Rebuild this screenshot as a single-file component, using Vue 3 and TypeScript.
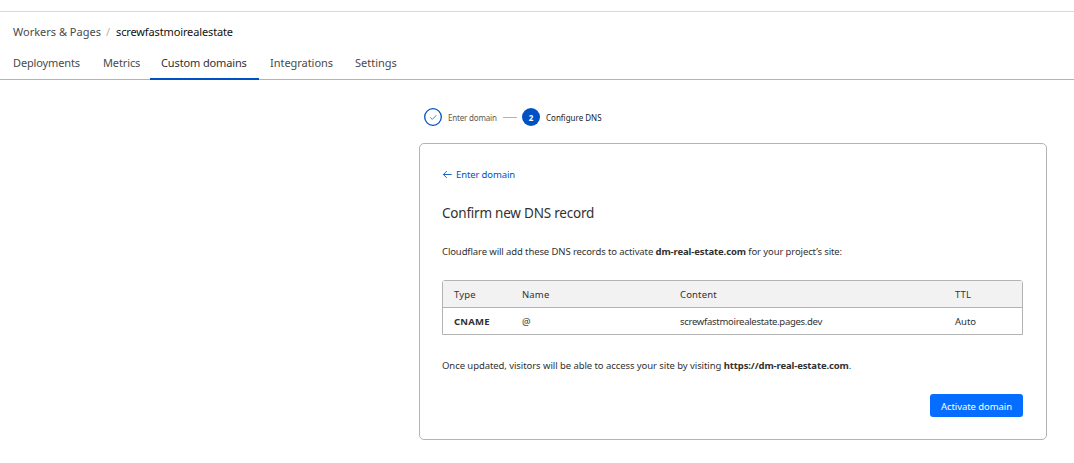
<script setup lang="ts">
import { ref } from 'vue'

interface Tab {
  id: string
  label: string
}

interface DnsRecord {
  type: string
  name: string
  content: string
  ttl: string
}

const tabs: Tab[] = [
  { id: 'deployments', label: 'Deployments' },
  { id: 'metrics', label: 'Metrics' },
  { id: 'domains', label: 'Custom domains' },
  { id: 'integrations', label: 'Integrations' },
  { id: 'settings', label: 'Settings' },
]
const activeTab = ref('domains')

const project = 'screwfastmoirealestate'
const domain = 'dm-real-estate.com'
const records: DnsRecord[] = [
  { type: 'CNAME', name: '@', content: `${project}.pages.dev`, ttl: 'Auto' },
]
</script>

<template>
  <div class="page">
    <header class="header">
      <nav class="crumbs">
        <a class="crumb-link">Workers &amp; Pages</a>
        <span class="slash">/</span>
        <span class="crumb-current">{{ project }}</span>
      </nav>
      <nav class="tabs">
        <a
          v-for="tab in tabs"
          :key="tab.id"
          :class="['tab', tab.id, { active: tab.id === activeTab }]"
          @click="activeTab = tab.id"
        >{{ tab.label }}</a>
      </nav>
    </header>

    <main class="main">
      <div class="steps">
        <svg class="step-icon" viewBox="0 0 18 18" width="18" height="18">
          <circle cx="9" cy="9" r="8.3" fill="none" stroke="#0051c3" stroke-width="1.3" />
          <path d="M6.2 9.3 8.3 11.4 12.4 7.2" fill="none" stroke="#0051c3" stroke-width="0.7" />
        </svg>
        <span class="step-label done">Enter domain</span>
        <span class="step-line"></span>
        <span class="step-number">2</span>
        <span class="step-label current">Configure DNS</span>
      </div>

      <section class="card">
        <a class="back">
          <svg viewBox="0 0 10 9" width="10" height="9">
            <path d="M9.7 4.5H1.4M4.8 1.1 1.4 4.5 4.8 7.9" fill="none" stroke="#0051c3" stroke-width="0.9" />
          </svg>
          <span>Enter domain</span>
        </a>
        <h1 class="title">Confirm new DNS record</h1>
        <p class="text intro">Cloudflare will add these DNS records to activate <strong>{{ domain }}</strong> for your project’s site:</p>

        <div class="table">
          <div class="row head">
            <span>Type</span>
            <span>Name</span>
            <span>Content</span>
            <span>TTL</span>
          </div>
          <div v-for="record in records" :key="record.content" class="row">
            <strong>{{ record.type }}</strong>
            <span>{{ record.name }}</span>
            <span class="content">{{ record.content }}</span>
            <span>{{ record.ttl }}</span>
          </div>
        </div>

        <p class="text outro">Once updated, visitors will be able to access your site by visiting <strong>https://{{ domain }}</strong>.</p>
        <div class="actions">
          <button class="activate" type="button">Activate domain</button>
        </div>
      </section>
    </main>
  </div>
</template>

<style>
body {
  background: #fff;
}
</style>

<style scoped>
.page {
  box-sizing: border-box;
  height: 463px;
  padding-top: 11px;
  overflow: hidden;
  color: #313131;
  font-family: "Noto Sans", "Open Sans", sans-serif;
}

.header {
  box-sizing: border-box;
  height: 69px;
  border-top: 1px solid #d9d9d9;
  border-bottom: 1px solid #b3b3b3;
  font-size: 11px;
}

.crumbs {
  display: flex;
  height: 35px;
  padding: 12px 0 0 13px;
  box-sizing: border-box;
  line-height: 16px;
}

.crumb-link {
  width: 93px;
  color: #4a4a4a;
}

.slash {
  width: 10px;
  color: #b3b3b3;
}

.crumb-current {
  color: #111;
  letter-spacing: -0.13px;
}

.tabs {
  display: flex;
  height: 33px;
  padding-left: 1px;
}

.tab {
  box-sizing: border-box;
  height: 33px;
  padding: 8px 0 0 12px;
  color: #4a4a4a;
  line-height: 16px;
  letter-spacing: -0.13px;
  cursor: pointer;
}

.deployments {
  width: 90px;
}

.metrics {
  width: 59px;
}

.domains {
  width: 109px;
  padding-left: 11px;
}

.integrations {
  width: 85px;
  padding-left: 11px;
  letter-spacing: -0.04px;
}

.settings {
  padding-left: 11px;
  letter-spacing: 0;
}

.tab.active {
  border-bottom: 2px solid #0051c3;
  color: #313131;
}

.main {
  width: 628px;
  margin-left: 419px;
}

.steps {
  display: flex;
  align-items: center;
  height: 18px;
  padding: 28px 0 0 5px;
}

.step-label {
  padding-top: 2px;
  font-size: 8px;
  line-height: 12px;
}

.done {
  width: 55px;
  margin-left: 6px;
  color: #595959;
  letter-spacing: -0.18px;
}

.current {
  margin-left: 6px;
  color: #222;
}

.step-line {
  width: 14px;
  height: 1px;
  background: #b3b3b3;
}

.step-number {
  width: 18px;
  height: 18px;
  margin-left: 5px;
  border-radius: 50%;
  background: #0051c3;
  color: #fff;
  font-size: 8px;
  font-weight: 700;
  line-height: 19px;
  text-align: center;
}

.card {
  box-sizing: border-box;
  height: 297px;
  margin-top: 17px;
  padding: 24px 23px 0 22px;
  border: 1px solid #b3b3b3;
  border-radius: 5px;
}

.back {
  display: flex;
  align-items: center;
  gap: 4px;
  height: 14px;
  color: #0051c3;
  font-size: 9.5px;
  line-height: 14px;
  letter-spacing: -0.12px;
}

.back svg {
  margin-bottom: 1px;
}

.title {
  margin: 21px 0 0;
  font-size: 13.5px;
  font-weight: 400;
  line-height: 20px;
  letter-spacing: -0.22px;
}

.text {
  margin: 0;
  font-size: 9.5px;
  line-height: 14px;
  letter-spacing: -0.11px;
  white-space: nowrap;
}

.intro {
  margin-top: 22px;
}

.table {
  margin-top: 21px;
  border: 1px solid #b3b3b3;
  border-radius: 3px 3px 0 0;
}

.row {
  display: grid;
  grid-template-columns: 68px 158px 275px 1fr;
  height: 26px;
  padding-left: 11px;
  font-size: 9.5px;
  line-height: 27px;
}

.head {
  border-bottom: 1px solid #b3b3b3;
  background: #f2f2f2;
  letter-spacing: 0.15px;
}

.row strong {
  letter-spacing: 0.2px;
}

.content {
  letter-spacing: -0.29px;
}

.outro {
  margin-top: 24px;
  letter-spacing: -0.07px;
}

.outro strong {
  letter-spacing: -0.12px;
}

.actions {
  display: flex;
  justify-content: flex-end;
  margin-top: 21px;
}

.activate {
  width: 93px;
  height: 23px;
  padding: 2px 0 0;
  border: 0;
  border-radius: 3px;
  background: #056dff;
  color: #fff;
  font: 9.5px/21px "Noto Sans", "Open Sans", sans-serif;
  letter-spacing: -0.07px;
}
</style>
